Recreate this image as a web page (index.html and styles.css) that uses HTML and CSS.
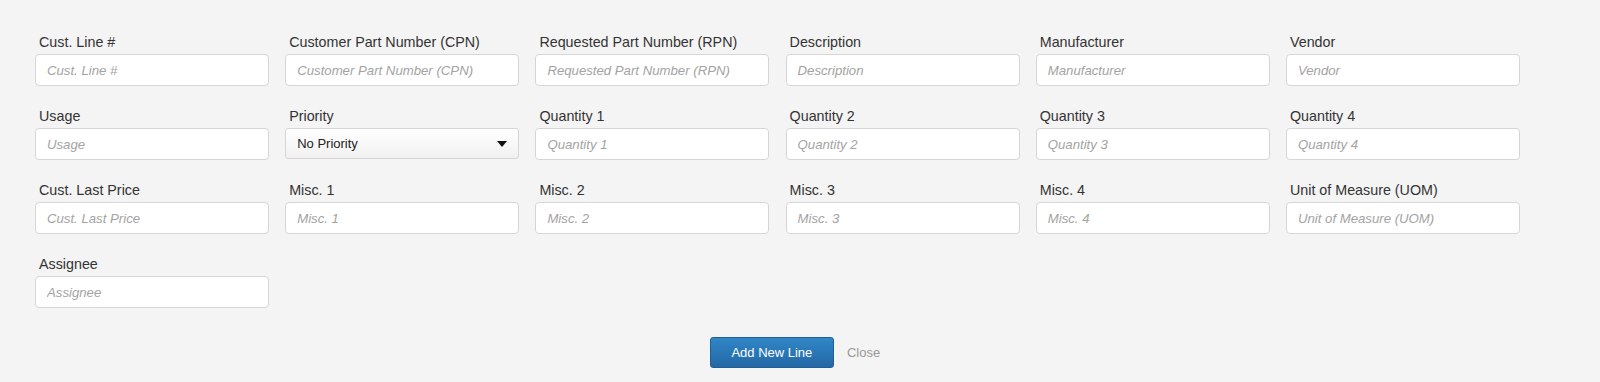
FILE: index.html
```html
<!DOCTYPE html>
<html lang="en">
<head>
    <meta charset="UTF-8">
    <meta name="viewport" content="width=device-width, initial-scale=1.0">
    <title>Add New Line</title>
    <link rel="stylesheet" href="styles.css">
</head>
<body>
    <form class="line-form">
        <div class="field-grid">
            <div class="field">
                <label for="custLine">Cust. Line #</label>
                <input type="text" id="custLine" placeholder="Cust. Line #">
            </div>
            <div class="field">
                <label for="cpn">Customer Part Number (CPN)</label>
                <input type="text" id="cpn" placeholder="Customer Part Number (CPN)">
            </div>
            <div class="field">
                <label for="rpn">Requested Part Number (RPN)</label>
                <input type="text" id="rpn" placeholder="Requested Part Number (RPN)">
            </div>
            <div class="field">
                <label for="description">Description</label>
                <input type="text" id="description" placeholder="Description">
            </div>
            <div class="field">
                <label for="manufacturer">Manufacturer</label>
                <input type="text" id="manufacturer" placeholder="Manufacturer">
            </div>
            <div class="field">
                <label for="vendor">Vendor</label>
                <input type="text" id="vendor" placeholder="Vendor">
            </div>

            <div class="field">
                <label for="usage">Usage</label>
                <input type="text" id="usage" placeholder="Usage">
            </div>
            <div class="field">
                <label for="priority">Priority</label>
                <div class="select-wrap">
                    <select id="priority">
                        <option>No Priority</option>
                        <option>Low</option>
                        <option>Medium</option>
                        <option>High</option>
                    </select>
                    <svg class="caret" width="10" height="6" viewBox="0 0 10 6"><path d="M0 0h10L5 6z" fill="#111"/></svg>
                </div>
            </div>
            <div class="field">
                <label for="qty1">Quantity 1</label>
                <input type="text" id="qty1" placeholder="Quantity 1">
            </div>
            <div class="field">
                <label for="qty2">Quantity 2</label>
                <input type="text" id="qty2" placeholder="Quantity 2">
            </div>
            <div class="field">
                <label for="qty3">Quantity 3</label>
                <input type="text" id="qty3" placeholder="Quantity 3">
            </div>
            <div class="field">
                <label for="qty4">Quantity 4</label>
                <input type="text" id="qty4" placeholder="Quantity 4">
            </div>

            <div class="field">
                <label for="lastPrice">Cust. Last Price</label>
                <input type="text" id="lastPrice" placeholder="Cust. Last Price">
            </div>
            <div class="field">
                <label for="misc1">Misc. 1</label>
                <input type="text" id="misc1" placeholder="Misc. 1">
            </div>
            <div class="field">
                <label for="misc2">Misc. 2</label>
                <input type="text" id="misc2" placeholder="Misc. 2">
            </div>
            <div class="field">
                <label for="misc3">Misc. 3</label>
                <input type="text" id="misc3" placeholder="Misc. 3">
            </div>
            <div class="field">
                <label for="misc4">Misc. 4</label>
                <input type="text" id="misc4" placeholder="Misc. 4">
            </div>
            <div class="field">
                <label for="uom">Unit of Measure (UOM)</label>
                <input type="text" id="uom" placeholder="Unit of Measure (UOM)">
            </div>

            <div class="field">
                <label for="assignee">Assignee</label>
                <input type="text" id="assignee" placeholder="Assignee">
            </div>
        </div>

        <div class="form-actions">
            <button type="button" class="btn-primary">Add New Line</button>
            <a href="#" class="close-link">Close</a>
        </div>
    </form>
</body>
</html>
```

FILE: styles.css
```css
body {
    margin: 0;
    padding: 0;
    background-color: #f4f4f4;
    font-family: "Liberation Sans", Arial, sans-serif;
    color: #333;
}
.line-form {
    padding: 32px 0 0 35px;
}
.field-grid {
    display: grid;
    grid-template-columns: repeat(6, 234px);
    column-gap: 16.2px;
    row-gap: 20px;
}
.field {
    display: flex;
    flex-direction: column;
}
.field label {
    font-size: 14.3px;
    line-height: 20px;
    margin-bottom: 2px;
    padding-left: 4px;
    color: #333;
}
.field input[type="text"],
.field select {
    box-sizing: border-box;
    width: 234px;
    height: 32px;
    margin: 0;
    padding: 0 11px;
    border: 1px solid #d6d6d6;
    border-radius: 4px;
    background-color: #fff;
    font-family: "Liberation Sans", Arial, sans-serif;
    font-size: 13px;
    color: #333;
}
.field input[type="text"] {
    font-size: 13.2px;
}
.field input[type="text"]::placeholder {
    color: #a3a3a3;
    font-style: italic;
}
.field input[type="text"]:focus,
.field select:focus {
    outline: none;
    border-color: #2a7ab8;
}
.select-wrap {
    position: relative;
}
.field select {
    -webkit-appearance: none;
    appearance: none;
    height: 31px;
    border-radius: 3px;
    background-image: linear-gradient(#ffffff, #f1f1f1);
    color: #222;
}
.caret {
    position: absolute;
    top: 13px;
    right: 12px;
    pointer-events: none;
}
.form-actions {
    display: flex;
    justify-content: center;
    align-items: center;
    gap: 13px;
    margin-top: 29px;
    padding-right: 45px;
}
.btn-primary {
    width: 124px;
    height: 31px;
    padding: 0;
    border: 1px solid #1f5f95;
    border-radius: 3px;
    background-image: linear-gradient(#3086c6, #2468a5);
    color: #fff;
    font-family: "Liberation Sans", Arial, sans-serif;
    font-size: 13px;
    cursor: pointer;
}
.btn-primary:hover {
    background-image: linear-gradient(#2a78b3, #1f5b92);
}
.close-link {
    font-size: 13px;
    color: #999;
    text-decoration: none;
}
```
